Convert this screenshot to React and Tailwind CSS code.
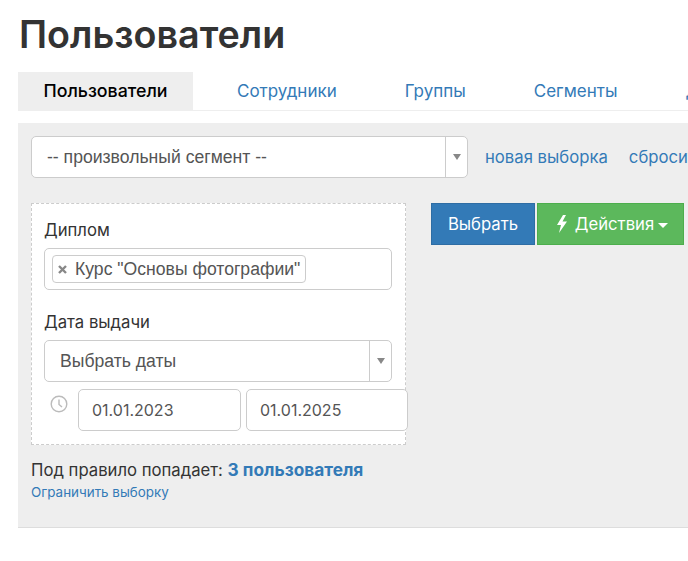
function SelectBox({ text, className }) {
    return (
        <div className={"flex items-stretch shrink-0 h-[42px] bg-white border border-[#ccc] rounded-[5px] " + className}>
            <div className="flex-1 flex items-center text-[#555] text-[17.6px] font-['Liberation_Sans',sans-serif]">{text}</div>
            <div className="w-[22px] flex items-center justify-center border-l border-[#ccc]">
                <span className="block w-0 h-0 border-x-[4px] border-x-transparent border-t-[6px] border-t-[#888]"></span>
            </div>
        </div>
    );
}

function DateInput({ value, className }) {
    return (
        <div className={"h-[42px] shrink-0 flex items-center pl-[13px] bg-white border border-[#ccc] rounded-[5px] text-[16px] text-[#555] " + className}>
            {value}
        </div>
    );
}

const tabs = ["Сотрудники", "Группы", "Сегменты", "Дипломы"];

export default function App() {
    return (
        <div className="w-[688px] h-[561px] overflow-hidden bg-white text-[16.7px] text-[#333] font-['Inter','Liberation_Sans',sans-serif]">
            <h1 className="pl-[19px] pt-[12px] h-[72px] text-[37.7px] leading-[44px] font-semibold text-[#333]">Пользователи</h1>

            <div className="ml-[18px] flex h-[39px] w-[670px] overflow-hidden border-b border-[#eee] whitespace-nowrap">
                <div className="w-[175px] shrink-0 h-[38px] pt-[1px] flex items-center justify-center bg-[#eee] text-[17.8px] font-medium text-black">Пользователи</div>
                <div className="flex gap-[68px] ml-[44px] text-[17px]">
                    {tabs.map((tab) => (
                        <div key={tab} className="h-[38px] pt-[2px] flex items-center text-[#337ab7]">{tab}</div>
                    ))}
                </div>
            </div>

            <div className="ml-[18px] mt-[12px] h-[405px] w-[670px] bg-[#eee] border-b border-[#ddd] pl-[13px] pt-[13px] overflow-hidden">
                <div className="flex items-center whitespace-nowrap">
                    <SelectBox text="-- произвольный сегмент --" className="w-[437px] pl-[15px]" />
                    <span className="ml-[17px] pt-[2px] text-[#337ab7]">новая выборка</span>
                    <span className="ml-[21px] pt-[2px] text-[#337ab7]">сбросить</span>
                </div>

                <div className="flex mt-[25px]">
                    <div className="w-[375px] h-[242px] bg-white border border-dashed border-[#ccc] pl-[12px] pt-[14px]">
                        <div className="leading-[24px] h-[30px]">Диплом</div>
                        <div className="w-[348px] h-[42px] flex items-center pl-[7px] bg-white border border-[#ccc] rounded-[5px]">
                            <div className="h-[28px] w-[254px] flex items-center border border-[#ccc] rounded-[4px] pl-[5px] whitespace-nowrap text-[#555] text-[17.6px] font-['Liberation_Sans',sans-serif]">
                                <svg className="w-[9px] h-[9px] mr-[8px] shrink-0" viewBox="0 0 9 9" stroke="#888" strokeWidth="2.4">
                                    <path d="M1 1L8 8M8 1L1 8" />
                                </svg>
                                Курс "Основы фотографии"
                            </div>
                        </div>
                        <div className="mt-[20px] h-[30px] leading-[24px]">Дата выдачи</div>
                        <SelectBox text="Выбрать даты" className="w-[348px] pl-[15px]" />
                        <div className="flex mt-[7px]">
                            <svg className="ml-[6px] mt-[6px] w-[18px] h-[18px] shrink-0" viewBox="0 0 18 18" fill="none" stroke="#bbb" strokeWidth="1.4">
                                <circle cx="9" cy="9" r="7.8" />
                                <path d="M9 4.5V9.5L12 12" />
                            </svg>
                            <DateInput value="01.01.2023" className="ml-[10px] w-[163px]" />
                            <DateInput value="01.01.2025" className="ml-[5px] w-[162px]" />
                        </div>
                    </div>

                    <button className="ml-[25px] w-[104px] h-[42px] pt-[2px] bg-[#337ab7] border border-[#2e6da4] text-white">Выбрать</button>
                    <button className="ml-[2px] w-[147px] h-[42px] pl-[3px] pt-[2px] bg-[#5cb85c] border border-[#4cae4c] text-white flex items-center justify-center">
                        <svg className="w-[12px] h-[18px] mr-[7px] mb-[2px] shrink-0" viewBox="0 0 12 18" fill="white">
                            <path d="M7 0L1 10H5L3 18L11 6.5H6.5L10 0Z" />
                        </svg>
                        Действия
                        <span className="block w-0 h-0 ml-[4px] border-x-[5px] border-x-transparent border-t-[5px] border-t-white"></span>
                    </button>
                </div>

                <div className="mt-[13px] leading-[24px] whitespace-nowrap">
                    Под правило попадает: <span className="font-bold text-[17.3px] text-[#337ab7]">3 пользователя</span>
                </div>
                <div className="text-[13.4px] leading-[20px] text-[#337ab7]">Ограничить выборку</div>
            </div>
        </div>
    );
}
